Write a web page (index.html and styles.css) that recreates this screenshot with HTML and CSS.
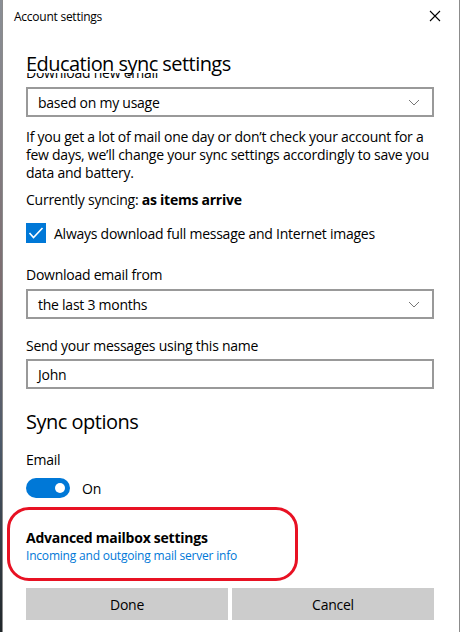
FILE: index.html
```html
<!DOCTYPE html>
<html lang="en">
<head>
<meta charset="UTF-8">
<meta name="viewport" content="width=device-width, initial-scale=1.0">
<title>Account settings</title>
<link rel="stylesheet" href="styles.css">
</head>
<body>

<div class="window">
  <div class="titlebar">
    <span class="title">Account settings</span>
    <svg class="close" width="12" height="12" viewBox="0 0 12 12">
      <path d="M1 1 L11 11 M11 1 L1 11" stroke="#000" stroke-width="1.1" fill="none"/>
    </svg>
  </div>

  <div class="header">
    <h1>Education sync settings</h1>
  </div>

  <div class="scroll">
    <div class="content">
      <label class="field-label hidden-top">Download new email</label>
      <div class="select">
        <span>based on my usage</span>
        <svg class="chevron" width="12" height="7" viewBox="0 0 12 7">
          <path d="M1 1 L6 6 L11 1" stroke="#777" stroke-width="1" fill="none"/>
        </svg>
      </div>

      <p class="note">If you get a lot of mail one day or don’t check your account for a few days, we’ll change your sync settings accordingly to save you data and battery.</p>

      <p class="status">Currently syncing: <b>as items arrive</b></p>

      <div class="check-row">
        <span class="checkbox">
          <svg width="20" height="20" viewBox="0 0 20 20">
            <path d="M3.5 10 L7.5 14.5 L16.5 5" stroke="#fff" stroke-width="1.6" fill="none"/>
          </svg>
        </span>
        <span>Always download full message and Internet images</span>
      </div>

      <label class="field-label spaced">Download email from</label>
      <div class="select">
        <span>the last 3 months</span>
        <svg class="chevron" width="12" height="7" viewBox="0 0 12 7">
          <path d="M1 1 L6 6 L11 1" stroke="#777" stroke-width="1" fill="none"/>
        </svg>
      </div>

      <label class="field-label spaced-sm">Send your messages using this name</label>
      <div class="textbox">John</div>

      <h2>Sync options</h2>
      <div class="field-label">Email</div>
      <div class="toggle-row">
        <span class="toggle"><span class="knob"></span></span>
        <span>On</span>
      </div>

      <div class="advanced">
        <div class="advanced-title">Advanced mailbox settings</div>
        <a class="advanced-link" href="#">Incoming and outgoing mail server info</a>
      </div>
    </div>
  </div>

  <div class="buttons">
    <button>Done</button>
    <button>Cancel</button>
  </div>
</div>

</body>
</html>
```

FILE: styles.css
```css
html, body {
  margin: 0;
  padding: 0;
  height: 100%;
}
body {
  font-family: 'Open Sans', 'Noto Sans', sans-serif;
  background: linear-gradient(#8a8f96, #7c6d70 45%, #4d5a6a 70%, #20262a);
  overflow: hidden;
}
.window {
  margin-left: 2px;
  width: 456px;
  height: 632px;
  background: #fff;
  border-left: 1px solid #8c8c8c;
  border-right: 1px solid #8c8c8c;
  display: flex;
  flex-direction: column;
  color: #000;
  letter-spacing: -0.25px;
}
.titlebar {
  height: 32px;
  display: flex;
  align-items: center;
  justify-content: space-between;
  padding: 0 18px 0 11px;
  flex-shrink: 0;
}
.title {
  font-size: 12px;
}
.close {
  display: block;
}
.header {
  height: 41px;
  padding-left: 23px;
  flex-shrink: 0;
}
h1 {
  margin: 0;
  padding-top: 18px;
  font-size: 20px;
  font-weight: 400;
  line-height: 28px;
  letter-spacing: -0.55px;
}
.scroll {
  overflow: hidden;
  flex: 1;
}
.content {
  padding: 0 25px 0 23px;
  font-size: 14px;
}
.field-label {
  display: block;
  line-height: 18px;
  margin-bottom: 5px;
}
/* label of the row scrolled up under the header */
.hidden-top {
  margin-top: -9px;
  margin-bottom: 5px;
}
.spaced {
  margin-top: 23px;
}
.spaced-sm {
  margin-top: 18px;
  margin-bottom: 4px;
}
.select, .textbox {
  height: 26px;
  border: 2px solid #999;
  display: flex;
  align-items: center;
  justify-content: space-between;
  padding: 0 10px 0 10px;
}
.chevron {
  display: block;
  margin-right: 2px;
}
.note {
  margin: 11px 0 0;
  line-height: 18px;
}
.status {
  margin: 9px 0 0;
  line-height: 18px;
}
.check-row {
  margin-top: 14px;
  display: flex;
  align-items: center;
  gap: 8px;
}
.checkbox {
  width: 20px;
  height: 20px;
  background: #0078d7;
  display: block;
}
.checkbox svg {
  display: block;
}
h2 {
  margin: 19px 0 15px;
  font-size: 20px;
  font-weight: 400;
  line-height: 28px;
  letter-spacing: -0.5px;
}
.toggle-row {
  margin-top: 9px;
  display: flex;
  align-items: center;
  gap: 12px;
}
.toggle {
  width: 44px;
  height: 20px;
  border-radius: 10px;
  background: #0078d7;
  display: flex;
  align-items: center;
  justify-content: flex-end;
  padding-right: 5px;
  box-sizing: border-box;
}
.knob {
  width: 10px;
  height: 10px;
  border-radius: 50%;
  background: #fff;
}
.advanced {
  margin: 9px 0 0 -19px;
  width: 269px;
  height: 62px;
  border: 3px solid #e81123;
  border-radius: 22px;
  padding: 6px 0 0 16px;
  display: flex;
  flex-direction: column;
  justify-content: center;
}
.advanced-title {
  font-weight: 700;
  font-size: 14px;
  line-height: 18px;
}
.advanced-link {
  color: #0078d7;
  font-size: 12px;
  line-height: 18px;
  letter-spacing: -0.2px;
  text-decoration: none;
}
.buttons {
  display: flex;
  gap: 4px;
  padding: 6px 25px 12px 23px;
  flex-shrink: 0;
}
.buttons button {
  flex: 1;
  height: 32px;
  background: #ccc;
  border: none;
  font-family: inherit;
  font-size: 14px;
  letter-spacing: -0.25px;
  color: #000;
}
```
